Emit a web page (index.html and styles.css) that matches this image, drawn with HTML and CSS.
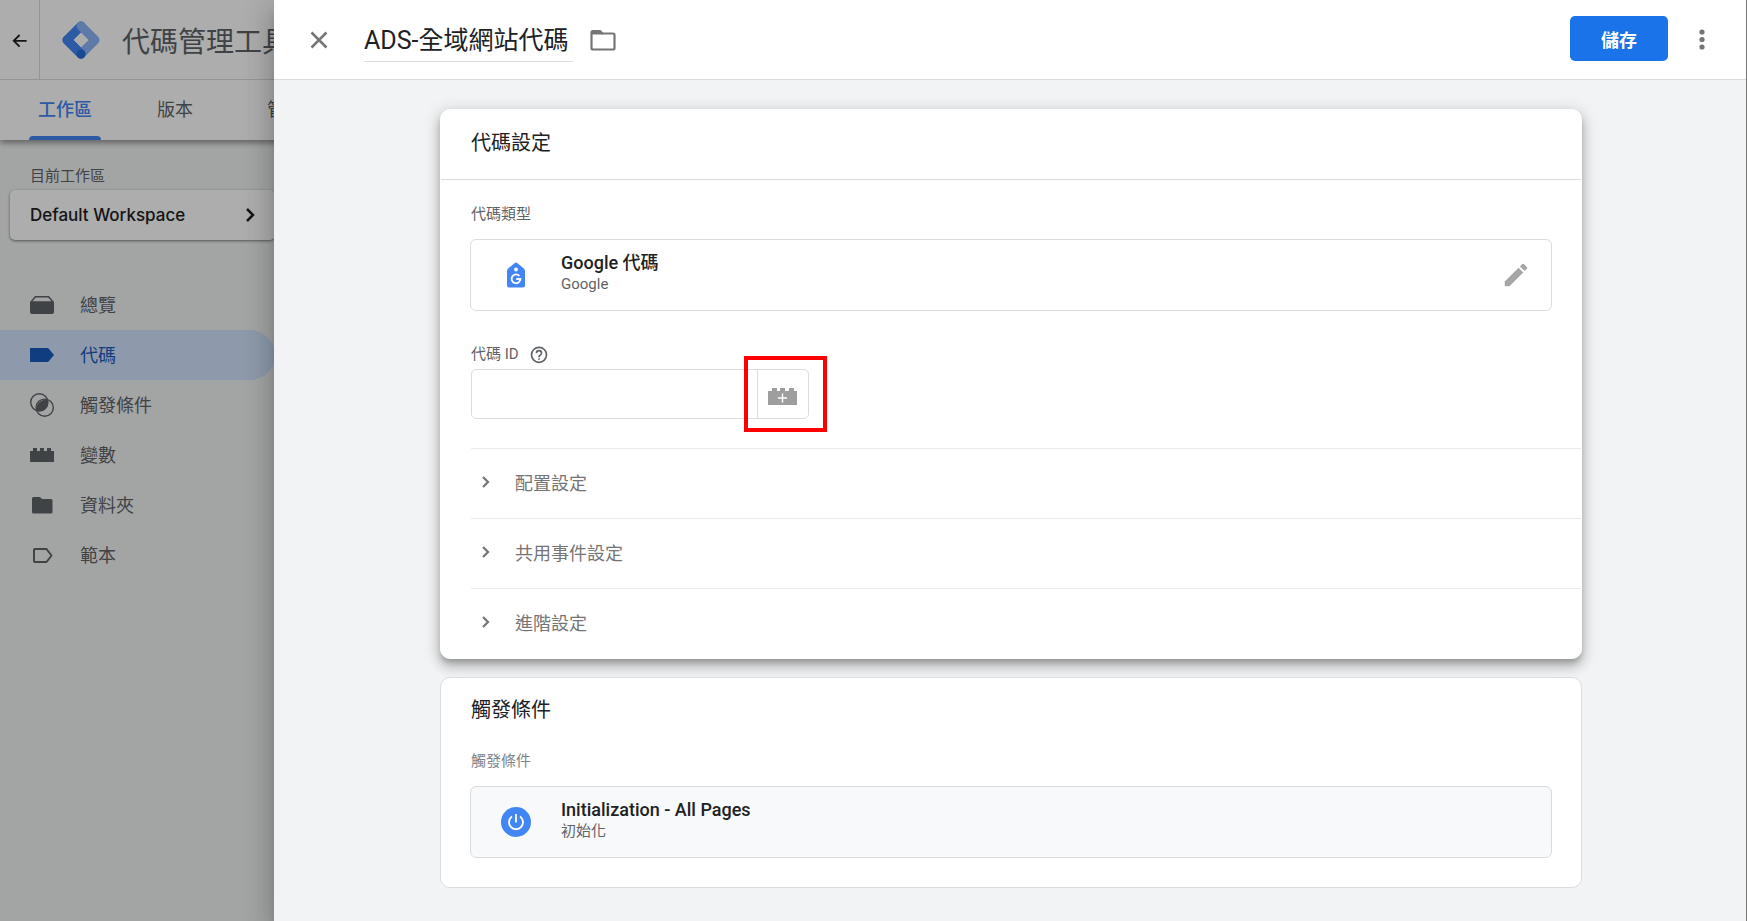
FILE: index.html
```html
<!DOCTYPE html>
<html lang="zh-Hant">

<head>
    <meta charset="UTF-8" />
    <meta name="viewport" content="width=device-width, initial-scale=1.0" />
    <title>代碼管理工具</title>
    <link rel="stylesheet" href="styles.css">
</head>

<body>

    <div class="app">
        <header class="topbar">
            <button class="back" type="button" aria-label="返回">
                <svg width="20" height="20" viewBox="0 0 24 24"><path d="M20 13H5M11.500 6L4.500 13l7 7" fill="none" stroke="#202124" stroke-width="2.200" /></svg>
            </button>
            <svg class="logo" width="38" height="38" viewBox="0 0 38 38">
                <path d="M19 5L5 19l14 14" fill="none" stroke="#4285f4" stroke-width="9" stroke-linejoin="round" stroke-linecap="round" />
                <path d="M19 5l14 14L19 33" fill="none" stroke="#8ab4f8" stroke-width="9" stroke-linejoin="round" stroke-linecap="round" />
                <path d="M5 19l14 14" fill="none" stroke="#4285f4" stroke-width="9" stroke-linecap="round" />
                <circle cx="19" cy="33" r="4.500" fill="#246fdb" />
            </svg>
            <span class="product">代碼管理工具</span>
        </header>

        <nav class="tabs">
            <a href="#" class="tab active">工作區</a>
            <a href="#" class="tab">版本</a>
            <a href="#" class="tab">管理</a>
        </nav>

        <aside class="sidebar">
            <p class="workspace-label">目前工作區</p>
            <button class="workspace" type="button">
                <span>Default Workspace</span>
                <svg width="12" height="16" viewBox="0 0 12 16"><path d="M2 2l6 6-6 6" fill="none" stroke="#202124" stroke-width="2.500" /></svg>
            </button>

            <nav class="menu">
                <a href="#" class="menu-item">
                    <svg width="24" height="24" viewBox="0 0 24 24"><path fill-rule="evenodd" d="M5 3h14l5 6v10a2 2 0 0 1-2 2H2a2 2 0 0 1-2-2V9zM5.800 4.500L2.500 8.200h19L18.200 4.500z" /></svg>
                    總覽
                </a>
                <a href="#" class="menu-item active">
                    <svg width="24" height="24" viewBox="0 0 24 24"><path d="M0 5h17.500q.8 0 1.300.7L24 12l-5.200 6.300q-.5.7-1.300.7H0z" /></svg>
                    代碼
                </a>
                <a href="#" class="menu-item">
                    <svg width="24" height="24" viewBox="0 0 24 24">
                        <circle cx="9.300" cy="9.300" r="8.600" fill="none" stroke="#5f6368" stroke-width="1.400" />
                        <circle cx="14.700" cy="14.700" r="8.600" fill="none" stroke="#5f6368" stroke-width="1.400" />
                        <path d="M17.700 7.200A8.600 8.600 0 0 0 7 18 8.600 8.600 0 0 0 17.700 7.200z" />
                    </svg>
                    觸發條件
                </a>
                <a href="#" class="menu-item">
                    <svg width="24" height="24" viewBox="0 0 24 24"><path d="M0 8h3V5h4v3h3V5h4v3h3V5h4v3h3v11H0z" /></svg>
                    變數
                </a>
                <a href="#" class="menu-item">
                    <svg width="24" height="24" viewBox="0 0 24 24"><path d="M3.500 4h6.500l2 2h9a1.500 1.500 0 0 1 1.500 1.500V19a1.500 1.500 0 0 1-1.500 1.500H3.500A1.500 1.500 0 0 1 2 19V5.500A1.500 1.500 0 0 1 3.500 4z" /></svg>
                    資料夾
                </a>
                <a href="#" class="menu-item">
                    <svg width="24" height="24" viewBox="0 0 24 24"><path d="M4.800 6h11.700l5 6.500-5 6.500H4.800a.8.800 0 0 1-.8-.8V6.800A.8.800 0 0 1 4.800 6z" fill="none" stroke="#5f6368" stroke-width="2" stroke-linejoin="round" /></svg>
                    範本
                </a>
            </nav>
        </aside>
    </div>

    <div class="scrim"></div>

    <div class="sheet">
        <header class="sheet-header">
            <button class="icon-btn" type="button" aria-label="關閉">
                <svg width="18" height="18" viewBox="0 0 18 18"><path d="M1.500 1.500l15 15M16.500 1.500l-15 15" stroke="#757575" stroke-width="2.500" /></svg>
            </button>
            <input class="tag-name" type="text" value="ADS-全域網站代碼" aria-label="代碼名稱">
            <button class="icon-btn" type="button" aria-label="資料夾">
                <svg width="26" height="22" viewBox="0 0 26 22">
                    <path d="M3 2h7l2.500 2.500H23a1.500 1.500 0 0 1 1.500 1.500v13a1.500 1.500 0 0 1-1.500 1.500H3A1.500 1.500 0 0 1 1.500 19V3.500A1.500 1.500 0 0 1 3 2z" fill="none" stroke="#757575" stroke-width="2.200" />
                    <path d="M2 2h8.500L13 5.500H2z" fill="#757575" />
                </svg>
            </button>
            <button class="save" type="button">儲存</button>
            <button class="icon-btn" type="button" aria-label="更多">
                <svg width="6" height="22" viewBox="0 0 6 22" fill="#757575">
                    <circle cx="3" cy="3" r="2.600" />
                    <circle cx="3" cy="10.500" r="2.600" />
                    <circle cx="3" cy="18" r="2.600" />
                </svg>
            </button>
        </header>

        <main class="content">
            <section class="card raised">
                <h2 class="card-title with-line">代碼設定</h2>
                <div class="card-body">
                    <p class="label">代碼類型</p>
                    <div class="entity">
                        <svg class="entity-icon" width="30" height="30" viewBox="0 0 30 30">
                            <path d="M13.500 3.200q1.500-1.200 3 0l6.300 5.300q1.200 1 1.200 2.500v14.500a2 2 0 0 1-2 2H8a2 2 0 0 1-2-2V11q0-1.500 1.200-2.500z" fill="#4285f4" />
                            <circle cx="15" cy="9.500" r="1.900" fill="#fff" />
                            <path d="M18.400 16A4.400 4.400 0 1 0 19.400 19H15.300" fill="none" stroke="#fff" stroke-width="1.800" />
                        </svg>
                        <div class="entity-text">
                            <div class="entity-name">Google 代碼</div>
                            <div class="entity-sub">Google</div>
                        </div>
                        <button class="icon-btn" type="button" aria-label="編輯">
                            <svg width="30" height="30" viewBox="0 0 24 24"><path fill="#a6a6a6" d="M3 17.250V21h3.750L17.810 9.940l-3.750-3.750L3 17.250zM20.710 7.040a1 1 0 0 0 0-1.410l-2.340-2.340a1 1 0 0 0-1.410 0l-1.830 1.830 3.750 3.750 1.830-1.830z" /></svg>
                        </button>
                    </div>

                    <div class="field-head">
                        <label class="label" for="tagId">代碼 ID</label>
                        <svg width="20" height="20" viewBox="0 0 24 24"><path fill="#5f6368" d="M11 19h2v-2h-2v2zm1-16a10 10 0 1 0 0 20 10 10 0 0 0 0-20zm0 18a8 8 0 1 1 0-16 8 8 0 0 1 0 16zm0-14a4 4 0 0 0-4 4h2a2 2 0 0 1 4 0c0 2-3 1.750-3 5h2c0-2.250 3-2.500 3-5a4 4 0 0 0-4-4z" /></svg>
                    </div>
                    <div class="field">
                        <input type="text" id="tagId" class="field-input">
                        <div class="variable-wrap">
                            <button class="variable" type="button" aria-label="選擇變數">
                                <svg width="30" height="18" viewBox="0 0 30 18">
                                    <path fill="#9e9e9e" d="M0 4h4V1h5v3h3V1h5v3h4V1h5v3h3v14H0z" />
                                    <path d="M14.500 6.500v9M10 11h9" stroke="#fff" stroke-width="1.400" />
                                </svg>
                            </button>
                            <div class="highlight"></div>
                        </div>
                    </div>
                </div>

                <div class="sections">
                    <button class="section-row" type="button">
                        <svg width="10" height="14" viewBox="0 0 10 14"><path d="M2 2l5 5-5 5" fill="none" stroke="#757575" stroke-width="2.200" /></svg>
                        配置設定
                    </button>
                    <button class="section-row" type="button">
                        <svg width="10" height="14" viewBox="0 0 10 14"><path d="M2 2l5 5-5 5" fill="none" stroke="#757575" stroke-width="2.200" /></svg>
                        共用事件設定
                    </button>
                    <button class="section-row" type="button">
                        <svg width="10" height="14" viewBox="0 0 10 14"><path d="M2 2l5 5-5 5" fill="none" stroke="#757575" stroke-width="2.200" /></svg>
                        進階設定
                    </button>
                </div>
            </section>

            <section class="card">
                <h2 class="card-title">觸發條件</h2>
                <div class="card-body last">
                    <p class="label light">觸發條件</p>
                    <div class="entity shaded">
                        <svg class="entity-icon" width="30" height="30" viewBox="0 0 30 30">
                            <circle cx="15" cy="15" r="15" fill="#4285f4" />
                            <path d="M15 7v8.500M11 9.500a7 7 0 1 0 8 0" fill="none" stroke="#fff" stroke-width="1.800" />
                        </svg>
                        <div class="entity-text">
                            <div class="entity-name">Initialization - All Pages</div>
                            <div class="entity-sub">初始化</div>
                        </div>
                    </div>
                </div>
            </section>
        </main>
    </div>

</body>

</html>
```
FILE: styles.css
```css
* {
    box-sizing: border-box;
    margin: 0;
    padding: 0;
}

body {
    height: 100vh;
    overflow: hidden;
    position: relative;
    font-family: Roboto, "Noto Sans CJK TC", sans-serif;
    background-color: #f1f3f4;
    color: #202124;
}

button,
input {
    font-family: inherit;
    border: none;
    background: none;
}

button {
    cursor: pointer;
}

a {
    text-decoration: none;
    color: inherit;
}

svg {
    display: block;
    flex-shrink: 0;
}

/* page behind the sheet */

.topbar {
    display: flex;
    align-items: center;
    height: 80px;
    background-color: #fff;
    border-bottom: 1px solid #dadce0;
}

.back {
    display: flex;
    align-items: center;
    justify-content: center;
    width: 40px;
    height: 100%;
    border-right: 1px solid #dadce0;
}

.logo {
    margin: 0 22px;
}

.product {
    font-size: 28px;
    color: #5f6368;
    white-space: nowrap;
}

.tabs {
    position: relative;
    display: flex;
    height: 60px;
    padding-left: 10px;
    background-color: #fff;
    box-shadow: 0 3px 6px rgba(0, 0, 0, 0.4);
    clip-path: inset(0 0 -12px 0);
}

.tab {
    position: relative;
    width: 110px;
    line-height: 60px;
    text-align: center;
    font-size: 18px;
    color: #5f6368;
}

.tab.active {
    color: #4285f4;
    font-weight: 500;
}

.tab.active::after {
    content: "";
    position: absolute;
    left: 19px;
    right: 19px;
    bottom: 0;
    height: 4px;
    border-radius: 4px 4px 0 0;
    background-color: #4285f4;
}

.sidebar {
    width: 275px;
    padding-top: 26px;
}

.workspace-label {
    padding-left: 30px;
    margin-bottom: 4px;
    font-size: 15px;
    line-height: 20px;
    color: #5f6368;
}

.workspace {
    display: flex;
    align-items: center;
    justify-content: space-between;
    width: 265px;
    height: 50px;
    margin-left: 10px;
    padding: 0 18px 0 20px;
    border-radius: 5px;
    background-color: #fff;
    box-shadow: 0 1px 3px rgba(0, 0, 0, 0.5);
    font-family: Inter, sans-serif;
    font-size: 17px;
    font-weight: 500;
    color: #202124;
}

.menu {
    margin-top: 40px;
}

.menu-item {
    display: flex;
    align-items: center;
    gap: 26px;
    height: 50px;
    padding-left: 30px;
    padding-bottom: 2px;
    border-radius: 0 25px 25px 0;
    font-size: 18px;
    color: #5f6368;
    fill: #5f6368;
}

.menu-item svg {
    margin-top: 2px;
}

.menu-item.active {
    background-color: #d2e3fc;
    color: #185abc;
    fill: #185abc;
}

.scrim {
    position: absolute;
    inset: 0;
    background-color: rgba(0, 0, 0, 0.32);
}

/* sheet */

.sheet {
    position: absolute;
    top: 0;
    right: 0;
    bottom: 0;
    left: 274px;
    overflow: hidden;
    background-color: #f1f3f4;
    border-right: 1px solid #757575;
    box-shadow: 0 8px 10px -5px rgba(0, 0, 0, 0.2), 0 16px 24px 2px rgba(0, 0, 0, 0.14), 0 6px 30px 5px rgba(0, 0, 0, 0.12);
}

.sheet-header {
    display: flex;
    align-items: center;
    height: 80px;
    padding: 0 41px 0 36px;
    background-color: #fff;
    border-bottom: 1px solid #dadce0;
}

.icon-btn {
    display: flex;
}

.tag-name {
    width: 209px;
    height: 44px;
    margin: 0 17px 0 36px;
    padding-bottom: 2px;
    border-bottom: 1px solid #dadce0;
    font-size: 25px;
    color: #202124;
}

.save {
    width: 98px;
    height: 45px;
    margin-left: auto;
    margin-right: 31px;
    margin-bottom: 2px;
    border-radius: 5px;
    background-color: #1a73e8;
    color: #fff;
    font-size: 18px;
    font-weight: 700;
}

.content {
    display: flex;
    flex-direction: column;
    gap: 18px;
    max-width: 1144px;
    margin: 0 auto;
    padding: 29px 0 0 2px;
}

.card {
    border: 1px solid #dadce0;
    border-radius: 10px;
    background-color: #fff;
}

.card.raised {
    border-color: #fff;
    box-shadow: 0 5px 6px -2px rgba(0, 0, 0, 0.22), 0 8px 12px 1px rgba(0, 0, 0, 0.14), 0 3px 16px 2px rgba(0, 0, 0, 0.14);
}

.card-title {
    padding: 20px 30px 0;
    font-size: 20px;
    font-weight: 400;
    line-height: 24px;
}

.card-title.with-line {
    padding-top: 21px;
    padding-bottom: 24px;
    border-bottom: 1px solid #dadce0;
}

.card-body {
    padding: 25px 30px 29px;
}

.card-body.last {
    padding-top: 30px;
}

.label {
    font-size: 15px;
    line-height: 18px;
    color: #5f6368;
}

.label.light {
    color: #80868b;
}

.entity {
    display: flex;
    align-items: center;
    gap: 30px;
    height: 72px;
    margin: 16px -1px 0;
    padding: 0 20px 0 30px;
    border: 1px solid #dadce0;
    border-radius: 6px;
}

.entity.shaded {
    background-color: #f8f9fa;
}

.entity-text {
    flex: 1;
    padding-bottom: 4px;
}

.entity-name {
    font-size: 18px;
    font-weight: 500;
    line-height: 22px;
}

.entity-sub {
    font-size: 15px;
    line-height: 20px;
    color: #5f6368;
}

.field-head {
    display: flex;
    align-items: center;
    gap: 10px;
    margin-top: 33px;
    margin-bottom: 5px;
}

.field {
    display: flex;
    width: 338px;
    height: 50px;
    border: 1px solid #dadce0;
    border-radius: 5px;
}

.field-input {
    flex: 1;
    min-width: 0;
    padding: 0 12px;
    font-size: 18px;
}

.variable-wrap {
    position: relative;
    display: flex;
    width: 51px;
    border-left: 1px solid #dadce0;
}

.variable {
    display: flex;
    flex: 1;
    align-items: center;
    justify-content: center;
    padding-top: 4px;
}

.highlight {
    position: absolute;
    inset: -14px -19px -14px -14px;
    border: 4px solid #f00;
    pointer-events: none;
}

.sections {
    padding-left: 30px;
}

.section-row {
    display: flex;
    align-items: center;
    gap: 24px;
    width: 100%;
    height: 70px;
    padding-left: 10px;
    padding-bottom: 4px;
    border-top: 1px solid #e8eaed;
    font-size: 18px;
    color: #757575;
}
```
